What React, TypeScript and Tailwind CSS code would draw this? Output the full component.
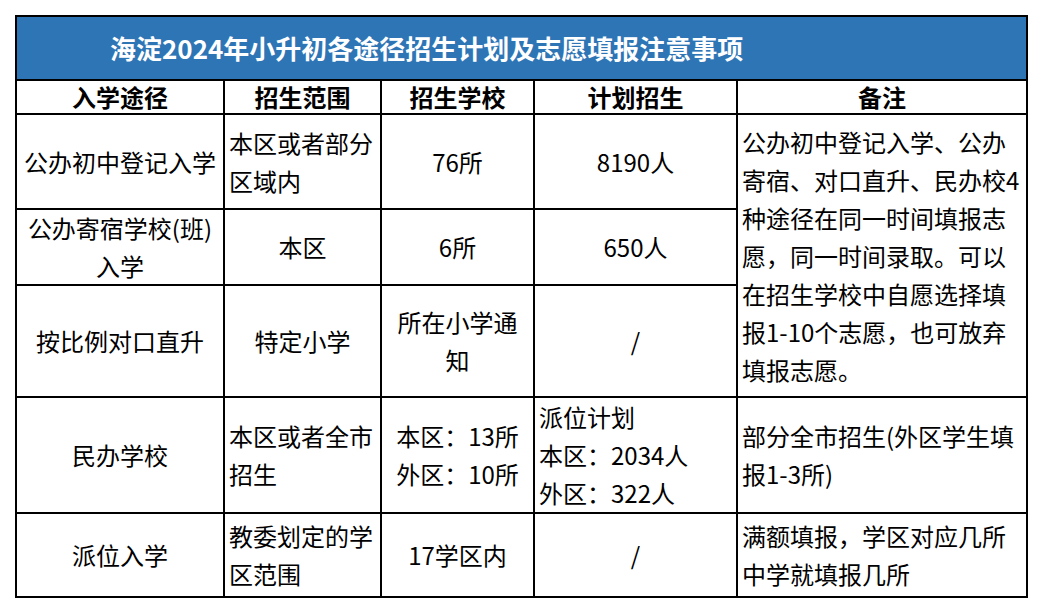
import type { ReactNode } from "react";

type CellProps = {
  lines: string[];
  align?: "center" | "left";
  className?: string;
};

function Cell({ lines, align = "center", className = "" }: CellProps) {
  const alignCls = align === "center" ? "items-center text-center" : "items-start text-left";
  return (
    <div
      className={`bg-white flex flex-col justify-center px-[4px] text-[24px] leading-[38px] text-black ${alignCls} ${className}`}
    >
      {lines.map((l, i) => (
        <span key={i} className="whitespace-nowrap">
          {l}
        </span>
      ))}
    </div>
  );
}

function Head({ children }: { children: ReactNode }) {
  return (
    <div className="bg-white flex items-center justify-center text-[24px] font-bold text-black leading-none">
      {children}
    </div>
  );
}

export default function App() {
  return (
    <div className="min-h-screen bg-white pt-[15px] pl-[15px] font-['Noto_Sans_CJK_SC',sans-serif]">
      <div className="grid w-max grid-cols-[206px_155px_151px_201px_288px] grid-rows-[62px_32px_93px_74px_110px_114px_82px] gap-[2px] p-[2px] bg-black">
        {/* Title */}
        <div className="col-span-5 bg-[#2E75B6] flex items-center pl-[93px] text-[26px] font-bold text-white leading-none">
          海淀2024年小升初各途径招生计划及志愿填报注意事项
        </div>

        {/* Header */}
        <Head>入学途径</Head>
        <Head>招生范围</Head>
        <Head>招生学校</Head>
        <Head>计划招生</Head>
        <Head>备注</Head>

        {/* Row 1 */}
        <Cell lines={["公办初中登记入学"]} />
        <Cell lines={["本区或者部分", "区域内"]} align="left" />
        <Cell lines={["76所"]} />
        <Cell lines={["8190人"]} />
        <Cell
          className="row-span-3"
          align="left"
          lines={[
            "公办初中登记入学、公办",
            "寄宿、对口直升、民办校4",
            "种途径在同一时间填报志",
            "愿，同一时间录取。可以",
            "在招生学校中自愿选择填",
            "报1-10个志愿，也可放弃",
            "填报志愿。",
          ]}
        />

        {/* Row 2 */}
        <Cell lines={["公办寄宿学校(班)", "入学"]} />
        <Cell lines={["本区"]} />
        <Cell lines={["6所"]} />
        <Cell lines={["650人"]} />

        {/* Row 3 */}
        <Cell lines={["按比例对口直升"]} />
        <Cell lines={["特定小学"]} />
        <Cell lines={["所在小学通", "知"]} />
        <Cell lines={["/"]} />

        {/* Row 4 */}
        <Cell lines={["民办学校"]} />
        <Cell lines={["本区或者全市", "招生"]} align="left" />
        <Cell lines={["本区：13所", "外区：10所"]} />
        <Cell lines={["派位计划", "本区：2034人", "外区：322人"]} align="left" />
        <Cell lines={["部分全市招生(外区学生填", "报1-3所)"]} align="left" />

        {/* Row 5 */}
        <Cell lines={["派位入学"]} />
        <Cell lines={["教委划定的学", "区范围"]} align="left" className="leading-[33px]" />
        <Cell lines={["17学区内"]} />
        <Cell lines={["/"]} />
        <Cell lines={["满额填报，学区对应几所", "中学就填报几所"]} align="left" />
      </div>
    </div>
  );
}
